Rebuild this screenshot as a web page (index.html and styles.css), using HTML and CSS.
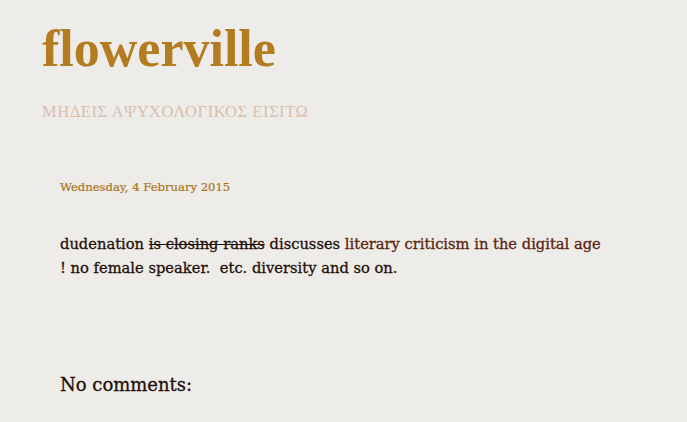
FILE: index.html
```html
<!DOCTYPE html>
<html>
<head>
<meta charset="utf-8">
<link rel="stylesheet" href="styles.css">
</head>
<body>
<div class="page">
  <header class="header">
    <h1 class="title">flowerville</h1>
    <p class="desc">ΜΗΔΕΙΣ ΑΨΥΧΟΛΟΓΙΚΟΣ ΕΙΣΙΤΩ</p>
  </header>
  <main class="main">
    <h2 class="date">Wednesday, 4 February 2015</h2>
    <div class="post">
      dudenation <s>is closing ranks</s> discusses <a class="link" href="#">literary criticism in the digital age</a><br>
      ! no female speaker.&nbsp; etc. diversity and so on.
    </div>
    <h4 class="comments">No comments:</h4>
  </main>
</div>
</body>
</html>
```
FILE: styles.css
```css
html, body {
  margin: 0;
  padding: 0;
  background: #eeece9;
}
.page {
  padding: 14px 0 0 42px;
  overflow: hidden;
  height: 422px;
  box-sizing: border-box;
}
.title {
  margin: 0;
  font-family: "Liberation Serif", serif;
  font-weight: bold;
  font-size: 52px;
  line-height: 70px;
  color: #b47c21;
}
.desc {
  margin: 18px 0 0 0;
  font-family: "Liberation Serif", serif;
  font-size: 16.5px;
  line-height: 20px;
  color: #d8bfae;
  letter-spacing: 0.55px;
}
.main {
  padding-left: 18px;
}
.date {
  margin: 56px 0 0 0;
  font-family: "DejaVu Serif", serif;
  font-weight: normal;
  font-size: 11.6px;
  line-height: 18px;
  color: #a9741a;
  -webkit-text-stroke: 0.2px currentColor;
}
.post {
  margin-top: 36px;
  font-family: "DejaVu Serif", serif;
  font-size: 14.7px;
  line-height: 24px;
  color: #1e0f08;
  -webkit-text-stroke: 0.3px currentColor;
}
.post s {
  text-decoration-thickness: 1px;
}
.link {
  color: #5a2410;
  text-decoration: none;
}
.comments {
  margin: 93px 0 0 0;
  font-family: "DejaVu Serif", serif;
  font-weight: normal;
  font-size: 18px;
  line-height: 24px;
  color: #1e0f08;
  -webkit-text-stroke: 0.3px currentColor;
}
```
